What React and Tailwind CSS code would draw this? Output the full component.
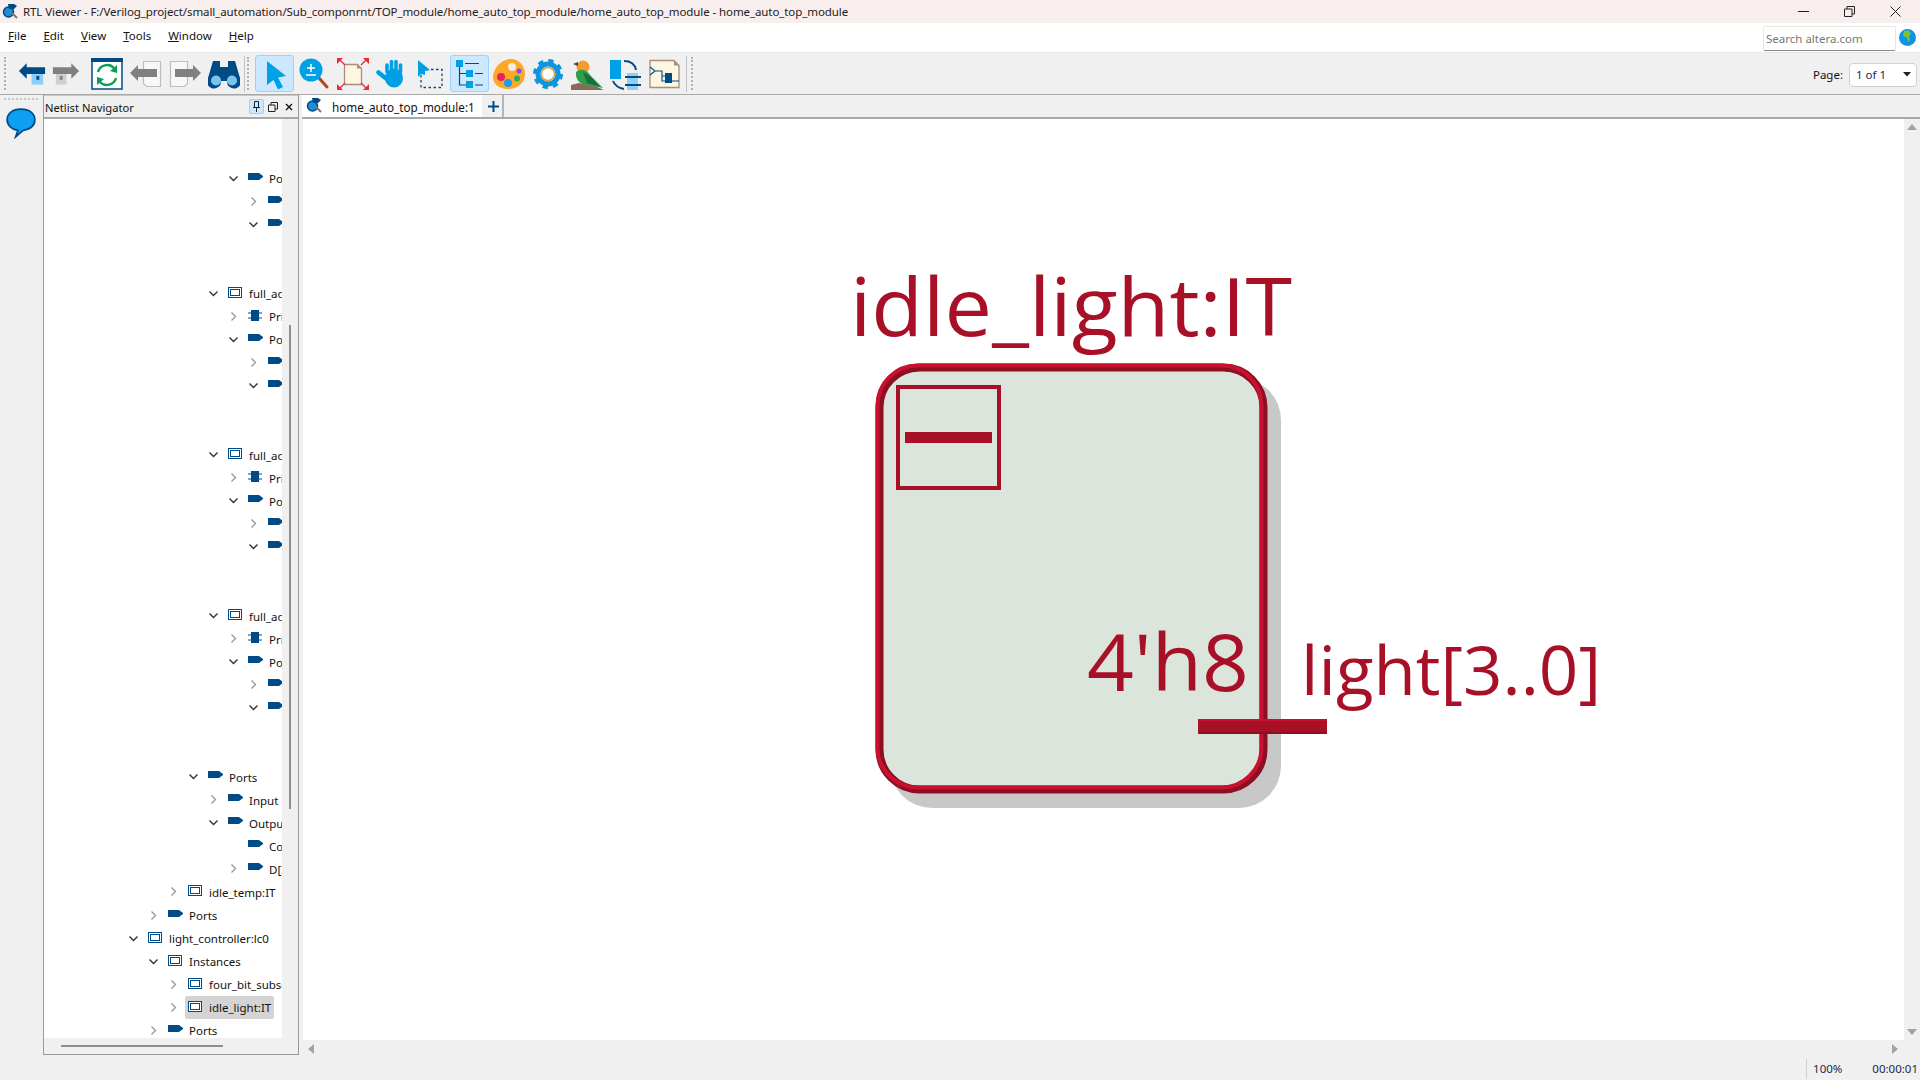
import React from 'react';

const NAVY = '#004a86';
const SKY = '#00a0e6';

const menus = ['File', 'Edit', 'View', 'Tools', 'Window', 'Help'];

const block = (name) => [
  [4, 'open', 'inst', name],
  [5, 'closed', 'prim', 'Primitives'],
  [5, 'open', 'port', 'Ports'],
  [6, 'closed', 'port', 'Input'],
  [6, 'open', 'port', 'Output'],
  null,
  null,
];

const treeRows = [
  [5, 'open', 'port', 'Ports'],
  [6, 'closed', 'port', 'Input'],
  [6, 'open', 'port', 'Output'],
  null,
  null,
  ...block('full_adder:fa1'),
  ...block('full_adder:fa2'),
  ...block('full_adder:fa3'),
  [3, 'open', 'port', 'Ports'],
  [4, 'closed', 'port', 'Input'],
  [4, 'open', 'port', 'Output'],
  [5, null, 'port', 'Cout'],
  [5, 'closed', 'port', 'D[3..0]'],
  [2, 'closed', 'inst', 'idle_temp:IT'],
  [1, 'closed', 'port', 'Ports'],
  [0, 'open', 'inst', 'light_controller:lc0'],
  [1, 'open', 'inst', 'Instances'],
  [2, 'closed', 'inst', 'four_bit_subscriber:fb0'],
  [2, 'closed', 'inst', 'idle_light:IT', true],
  [1, 'closed', 'port', 'Ports'],
];

const Chevron = ({ state }) => {
  if (!state) return <span className="w-[19px] shrink-0" />;
  return (
    <span className="w-[19px] shrink-0 flex">
      <svg width="9" height="9" viewBox="0 0 9 9" className="block">
        {state === 'open' ? (
          <polyline points="0.5,2.5 4.5,6.5 8.5,2.5" fill="none" stroke="#333" strokeWidth="1.4" />
        ) : (
          <polyline points="2.5,0.5 6.5,4.5 2.5,8.5" fill="none" stroke="#9a9a9a" strokeWidth="1.4" />
        )}
      </svg>
    </span>
  );
};

const TreeIcon = ({ type }) => {
  if (type === 'port') {
    return (
      <svg width="15" height="8" viewBox="0 0 15 8" className="block -mt-[3px]">
        <polygon points="0,0 11,0 15,3 15,4 11,7 0,7" fill={NAVY} />
      </svg>
    );
  }
  if (type === 'prim') {
    return (
      <svg width="14" height="12" viewBox="0 0 14 12" className="block -mt-[2px]">
        <rect x="3" y="0" width="8" height="11" fill={NAVY} />
        <path d="M0 3h14M0 8h14" stroke={NAVY} strokeWidth="1.2" />
      </svg>
    );
  }
  return (
    <svg width="14" height="12" viewBox="0 0 14 12" className="block -mt-[1px]">
      <rect x="0.5" y="0.5" width="13" height="10" fill="#fff" stroke={NAVY} />
      <rect x="2.5" y="2.5" width="9" height="6" fill="#fff" stroke={NAVY} />
    </svg>
  );
};

const TreeRow = ({ row }) => {
  if (!row) return <div className="h-[23.03px]" />;
  const [level, state, icon, label, selected] = row;
  return (
    <div className="h-[23.03px] flex items-center whitespace-nowrap" style={{ paddingLeft: 85 + level * 20 }}>
      <Chevron state={state} />
      <span className={`flex items-center h-[23px] -ml-[3px] pl-[3px] pr-[3px] rounded-[2px] ${selected ? 'bg-[#d4d4d4]' : ''}`}>
        <span className="w-[21px] shrink-0">
          <TreeIcon type={icon} />
        </span>
        <span className="pt-[1px]">{label}</span>
      </span>
    </div>
  );
};

const Logo = () => (
  <svg width="16" height="16" viewBox="0 0 16 16" className="block shrink-0">
    <circle cx="6.5" cy="8" r="5" fill="#1b8fd6" stroke={NAVY} strokeWidth="1.5" />
    <path d="M10 9l5 5" stroke="#777" strokeWidth="2" />
    <polygon points="6,0 12,0 15,2 12,5 7,5" fill={NAVY} />
  </svg>
);

const Icon = ({ children }) => (
  <svg width="32" height="32" viewBox="0 0 32 32" className="block">
    {children}
  </svg>
);

const BackIcon = () => (
  <Icon>
    <rect x="15" y="15" width="12" height="12" fill="#8dcff5" />
    <rect x="20" y="18" width="3" height="4" fill={NAVY} />
    <polygon points="2,13 10,5 10,9 29,9 29,16 10,16 10,21" fill={NAVY} />
  </Icon>
);

const ForwardIcon = () => (
  <Icon>
    <rect x="6" y="15" width="11" height="12" fill="#cfcfcf" />
    <rect x="10" y="18" width="3" height="4" fill="#808080" />
    <polygon points="30,13 22,5 22,9 3,9 3,16 22,16 22,21" fill="#808080" />
  </Icon>
);

const RefreshIcon = () => (
  <Icon>
    <rect x="1" y="1" width="30" height="30" fill="#fff" stroke={NAVY} strokeWidth="1.5" />
    <rect x="0" y="0" width="32" height="4" fill={NAVY} />
    <path d="M7 14a9.5 9.5 0 0 1 16-4" fill="none" stroke="#0a9d58" strokeWidth="2.4" />
    <path d="M25 20a9.5 9.5 0 0 1-16 4" fill="none" stroke="#0a9d58" strokeWidth="2.4" />
    <polygon points="26,7 26,15 19,13" fill="#0a9d58" />
    <polygon points="6,27 6,19 13,21" fill="#0a9d58" />
  </Icon>
);

const PageBackIcon = () => (
  <Icon>
    <path d="M14.5 3.500h17v25h-14l-3-3z" fill="#f8f8f8" stroke="#bdbdbd" strokeWidth="1.200" transform="translate(-1 0)" />
    <polygon points="0,15 8,7 8,11 27,11 27,19 8,19 8,23" fill="#808080" />
  </Icon>
);

const PageNextIcon = () => (
  <Icon>
    <path d="M0.500 3.500h17v22l-3 3h-14z" fill="#f8f8f8" stroke="#bdbdbd" strokeWidth="1.200" transform="translate(1 0)" />
    <polygon points="32,15 24,7 24,11 6,11 6,19 24,19 24,23" fill="#808080" />
  </Icon>
);

const BinocularsIcon = () => (
  <Icon>
    <path d="M5 3h7v6h8V3h7l5 17a7 7 0 1 1-13 3h-6a7 7 0 1 1-13-3z" fill={NAVY} />
    <circle cx="8" cy="22.500" r="5" fill="#7cc4f0" />
    <circle cx="24" cy="22.500" r="5" fill="#7cc4f0" />
  </Icon>
);

const CursorIcon = () => (
  <Icon>
    <polygon points="8,3 27,18 19,19.500 24,29 19,31.500 14.500,22 8,27" fill={SKY} />
  </Icon>
);

const ZoomIcon = () => (
  <Icon>
    <path d="M21 20l8 9" stroke="#b5451f" strokeWidth="3" strokeLinecap="round" />
    <circle cx="13" cy="12" r="11.500" fill={SKY} />
    <path d="M9 10h8M13 6v8M8 17h10" stroke="#fff" strokeWidth="1.500" />
  </Icon>
);

const FitIcon = () => (
  <Icon>
    <path d="M7.500 6.500h13l4 4v16h-17z" fill="#fdf6e0" stroke="#a68d7d" strokeWidth="1.300" />
    <polygon points="20,6 24.500,10.500 20,10.500" fill="#a68d7d" />
    <path d="M3 2l5 5M29 2l-5 5M3 30l5-5M29 30l-5-5" stroke="#ee2a36" strokeWidth="1.300" />
    <path d="M0 0h6l-6 6zM32 0h-6l6 6zM0 32h6l-6-6zM32 32h-6l6-6z" fill="#ee2a36" />
  </Icon>
);

const HandIcon = () => (
  <Icon>
    <ellipse cx="18" cy="20" rx="9" ry="9.500" fill={SKY} />
    <path d="M11 14V7M15.500 13V3.500M20 13V3.500M24.500 14V7" stroke={SKY} strokeWidth="3.600" strokeLinecap="round" />
    <path d="M12 22L2.500 14.500" stroke={SKY} strokeWidth="4.500" strokeLinecap="round" />
  </Icon>
);

const MarqueeIcon = () => (
  <Icon>
    <rect x="6" y="11.500" width="21" height="18" fill="none" stroke={NAVY} strokeWidth="1.300" strokeDasharray="2.500 2.500" />
    <polygon points="3,2 15,12 10,13 10,17 6,16 3,19" fill={SKY} />
  </Icon>
);

const TreeViewIcon = () => (
  <Icon>
    <rect x="2" y="2" width="7" height="7" fill={SKY} />
    <rect x="12" y="12" width="7" height="7" fill={SKY} />
    <rect x="12" y="23" width="7" height="7" fill={SKY} />
    <path d="M5.500 9v18H12M5.500 15.500H12M11 5.500h14M21 15.500h8M21 27h8" fill="none" stroke={NAVY} strokeWidth="1.200" />
  </Icon>
);

const PaletteIcon = () => (
  <Icon>
    <path d="M18 1c8 0 14 7 14 15 0 9-8 15-17 15C6 31 0 26 0 19 0 11 8 1 18 1z" fill="#ffa726" />
    <circle cx="19" cy="9" r="4" fill="#f3ece0" />
    <circle cx="8" cy="19" r="4" fill="#e91e63" />
    <circle cx="15" cy="25" r="4" fill="#1e9be9" />
    <circle cx="24" cy="20.500" r="3" fill="#27ae60" />
    <circle cx="26" cy="13" r="2.500" fill="#7c4dff" />
  </Icon>
);

const GearIcon = () => (
  <Icon>
    <circle cx="16" cy="16" r="12.500" fill="none" stroke="#0d95df" strokeWidth="5" strokeDasharray="5 4.800" />
    <circle cx="16" cy="16" r="10" fill="none" stroke="#0d95df" strokeWidth="5" />
    <circle cx="16" cy="16" r="6.500" fill="#fff" stroke="#e0a43a" strokeWidth="1.500" />
  </Icon>
);

const BirdIcon = () => (
  <Icon>
    <polygon points="0,32 0,27 8,25 24,28 33,32" fill="#8a6a5a" />
    <circle cx="12" cy="9" r="6.500" fill="#f39c2d" />
    <polygon points="2,6 7,4 7,8" fill="#444" />
    <path d="M5 14c5-4 11-2 14 3l13 13-15-3C9 27 4 21 5 14z" fill="#2e9e4a" />
    <path d="M12 14l7 4 10 11-13-4z" fill="#16713a" />
  </Icon>
);

const HierarchyIcon = () => (
  <Icon>
    <rect x="0" y="2" width="11" height="19" fill="#00a0e6" />
    <path d="M14 3c7 0 11 4 12 9M3 23c2 5 6 7 11 8" fill="none" stroke={NAVY} strokeWidth="2" />
    <rect x="17" y="15" width="11" height="17" fill="#8dcff5" />
    <path d="M15 19h16M15 27h16" stroke={NAVY} strokeWidth="1.800" />
  </Icon>
);

const ChipIcon = () => (
  <Icon>
    <path d="M1 2.500h24l5 5v22H1z" fill="#fdf6e0" stroke="#a68d7d" strokeWidth="1.300" />
    <polygon points="25,2.500 30,7.500 25,7.500" fill="#a68d7d" />
    <path d="M1 9l5 4-5 4M6 13h7v10h17M13 18h5" fill="none" stroke={NAVY} strokeWidth="1.100" />
    <rect x="16" y="15" width="7" height="10" fill={NAVY} />
  </Icon>
);

const Btn = ({ width = 'w-[39px]', active, children }) => (
  <div className={`${width} h-[37px] shrink-0 flex items-center justify-center rounded-[3px] border ${active ? 'bg-[#cce8ff] border-[#99d1ff]' : 'border-transparent'}`}>
    {children}
  </div>
);

const Grip = () => (
  <div className="w-[2px] h-[33px] border-l-2 border-dotted border-[#b0b0b0]" />
);

const Triangle = ({ points, className = '' }) => (
  <svg width="12" height="12" viewBox="0 0 12 12" className={`block ${className}`}>
    <polygon points={points} fill="#a3a3a3" />
  </svg>
);

const Diagram = () => (
  <svg viewBox="303 119 1601 921" width="1601" height="921" className="block">
    <rect x="890" y="378" width="391" height="430" rx="42" fill="#c8c8c8" />
    <rect x="879.500" y="367.500" width="384" height="422" rx="40" fill="#dce5dc" stroke="#8e0e22" strokeWidth="8" />
    <rect x="877.500" y="365.500" width="384" height="422" rx="40" fill="none" stroke="#c8112f" strokeWidth="4" />
    <rect x="898" y="387" width="101" height="101" fill="none" stroke="#a81028" strokeWidth="4" />
    <rect x="905" y="432" width="87" height="11" fill="#a81028" />
    <rect x="1198" y="719" width="129" height="15" fill="#a81028" />
    <rect x="1198" y="719" width="128" height="2" fill="#c8112f" />
    <rect x="1200" y="732" width="127" height="2" fill="#8e0e22" />
    <text x="850" y="336" textLength="442" lengthAdjust="spacingAndGlyphs" className="font-['Open_Sans',sans-serif] fill-[#a81028] text-[81px]">idle_light:IT</text>
    <text x="1087" y="691" textLength="162" lengthAdjust="spacingAndGlyphs" className="font-['Open_Sans',sans-serif] fill-[#a81028] text-[78px]">4'h8</text>
    <text x="1301" y="695" textLength="300" lengthAdjust="spacingAndGlyphs" className="font-['Open_Sans',sans-serif] fill-[#a81028] text-[67px]">light[3..0]</text>
  </svg>
);

export default function App() {
  return (
    <div className="w-[1920px] h-[1080px] overflow-hidden flex flex-col bg-[#f0f0f0] text-[11.5px] text-[#111] font-['Noto_Sans',sans-serif]">
      {/* title bar */}
      <div className="h-[23px] shrink-0 flex items-center bg-[#f9eeee] pl-[2px]">
        <Logo />
        <span className="ml-[5px] text-[#222] tracking-[-0.09px]">
          RTL Viewer - F:/Verilog_project/small_automation/Sub_componrnt/TOP_module/home_auto_top_module/home_auto_top_module - home_auto_top_module
        </span>
        <div className="ml-auto flex items-center gap-[35px] pr-[19px]">
          <svg width="11" height="11" viewBox="0 0 11 11" className="block">
            <path d="M0 5.500h11" stroke="#222" />
          </svg>
          <svg width="11" height="11" viewBox="0 0 11 11" className="block">
            <path d="M.5 3h7.500v7.500H.5zM3 3V.5h7.500V8H8" fill="none" stroke="#222" />
          </svg>
          <svg width="11" height="11" viewBox="0 0 11 11" className="block">
            <path d="M.5.500l10 10M10.500.500l-10 10" stroke="#222" />
          </svg>
        </div>
      </div>

      {/* menu bar */}
      <div className="h-[29px] shrink-0 flex items-center bg-white pl-[8px] pr-[4px]">
        <div className="flex gap-[17px] pb-[3px]">
          {menus.map((m) => (
            <span key={m}>
              <span className="underline">{m[0]}</span>
              {m.slice(1)}
            </span>
          ))}
        </div>
        <div className="ml-auto mt-[2px] w-[133px] h-[25px] flex items-center pl-[2px] border border-[#e6e6e6] border-b-[#8a8a8a] rounded-[2px] text-[#777]">
          Search altera.com
        </div>
        <svg width="17" height="17" viewBox="0 0 17 17" className="block ml-[3px]">
          <circle cx="8.500" cy="8.500" r="8.500" fill="#0c95e8" />
          <path d="M5 2l5-.5 2 3-2 3 1 3-2 3-1-5-4-1.500z" fill="#7bc43a" />
        </svg>
      </div>

      {/* toolbar */}
      <div className="h-[43px] shrink-0 flex items-center border-t border-[#e8e8e8] border-b border-b-[#a8a8a8] pl-[4px]">
        <Grip />
        <div className="ml-[10px] flex items-center">
          <Btn width="w-[33px]"><BackIcon /></Btn>
          <Btn width="w-[33px]"><ForwardIcon /></Btn>
        </div>
        <div className="ml-[5px] flex items-center">
          <Btn><RefreshIcon /></Btn>
          <Btn><PageBackIcon /></Btn>
          <Btn><PageNextIcon /></Btn>
          <Btn><BinocularsIcon /></Btn>
        </div>
        <div className="w-px h-[36px] bg-[#c4c4c4] ml-[1px]" />
        <div className="ml-[2px]"><Grip /></div>
        <div className="ml-[6px] flex items-center">
          <Btn active><CursorIcon /></Btn>
          <Btn><ZoomIcon /></Btn>
          <Btn><FitIcon /></Btn>
          <Btn><HandIcon /></Btn>
          <Btn><MarqueeIcon /></Btn>
          <Btn active><TreeViewIcon /></Btn>
          <Btn><PaletteIcon /></Btn>
          <Btn><GearIcon /></Btn>
          <Btn><BirdIcon /></Btn>
          <Btn><HierarchyIcon /></Btn>
          <Btn><ChipIcon /></Btn>
        </div>
        <div className="w-px h-[36px] bg-[#c4c4c4] ml-[2px]" />
        <div className="ml-[4px]"><Grip /></div>
        <div className="ml-auto flex items-center pr-[3px] pt-[2px]">
          <span>Page:</span>
          <div className="ml-[6px] w-[68px] h-[24px] flex items-center pl-[6px] pr-[5px] bg-white border border-[#d0d0d0] rounded-[4px] text-[#1a2a4a]">
            <span>1 of 1</span>
            <svg width="8" height="5" viewBox="0 0 8 5" className="block ml-auto">
              <polygon points="0,0 8,0 4,4.500" fill="#222" />
            </svg>
          </div>
        </div>
      </div>

      {/* body */}
      <div className="h-[963px] shrink-0 flex">
        {/* left rail */}
        <div className="w-[43px] shrink-0 pt-[3px] pl-[4px]">
          <div className="w-[34px] border-t-2 border-dotted border-[#c4c4c4]" />
          <svg width="32" height="32" viewBox="0 0 30 30" className="block ml-[1px] mt-[7px]">
            <path d="M15 2c8 0 13 4 13 10s-5 9-11 10l-7 6 2-6C6 21 2 17 2 12 2 6 7 2 15 2z" fill="#0da0f2" stroke={NAVY} strokeWidth="1.600" />
          </svg>
        </div>

        {/* netlist navigator */}
        <div className="w-[256px] h-[960px] shrink-0 flex flex-col border-l border-r border-b border-[#9a9a9a]">
          <div className="h-[24px] shrink-0 flex items-center pl-[1px] pr-[3px] border-t border-[#c8c8c8] border-b-2 border-b-[#a8a8a8]">
            <span className="pt-[4px] text-[11.2px]">Netlist Navigator</span>
            <div className="ml-auto flex items-center gap-[4px]">
              <div className="w-[15px] h-[15px] flex items-center justify-center bg-[#cce8ff] border border-[#99d1ff] rounded-[2px]">
                <svg width="9" height="11" viewBox="0 0 9 11" className="block">
                  <path d="M2.500.5h4v6h-4zM1 6.500h7M4.500 6.500V11" fill="none" stroke="#222" />
                </svg>
              </div>
              <svg width="10" height="10" viewBox="0 0 10 10" className="block">
                <path d="M.5 3h6.500v6.500H.5zM3 3V.5h6.500V7H7" fill="none" stroke="#222" />
              </svg>
              <svg width="12" height="12" viewBox="0 0 12 12" className="block ml-[1px]">
                <path d="M3 3l6 6M9 3l-6 6" stroke="#111" strokeWidth="1.400" />
              </svg>
            </div>
          </div>
          <div className="flex-1 min-h-0 flex">
            <div className="w-[238px] bg-white overflow-hidden pt-[48px]">
              {treeRows.map((row, i) => (
                <TreeRow key={i} row={row} />
              ))}
            </div>
            <div className="flex-1 pl-[7px] pt-[206px] pb-[229px]">
              <div className="w-[2px] h-full bg-[#8e8e8e]" />
            </div>
          </div>
          <div className="h-[16px] shrink-0 flex items-center pl-[17px]">
            <div className="w-[162px] h-[2px] bg-[#8e8e8e]" />
          </div>
        </div>

        {/* main */}
        <div className="flex-1 min-w-0 flex flex-col pl-[4px]">
          <div className="h-[24px] shrink-0 flex items-stretch border-b-2 border-[#a8a8a8] -ml-[1px]">
            <div className="w-[180px] flex items-center bg-white pl-[4px] text-[11.7px]">
              <Logo />
              <span className="ml-[10px] pt-[3px]">home_auto_top_module:1</span>
            </div>
            <div className="w-[20px] ml-[2px] flex items-center justify-center border-r-2 border-[#b4b4b4]">
              <svg width="11" height="11" viewBox="0 0 11 11" className="block">
                <path d="M5.500 0v11M0 5.500h11" stroke={NAVY} strokeWidth="2" />
              </svg>
            </div>
          </div>
          <div className="flex-1 min-h-0 flex">
            <div className="w-[1601px] bg-white overflow-hidden">
              <Diagram />
            </div>
            <div className="flex-1 flex flex-col items-center justify-between py-[2px]">
              <Triangle points="1,9 11,9 6,3" />
              <Triangle points="1,3 11,3 6,9" />
            </div>
          </div>
          <div className="h-[18px] shrink-0 flex items-center justify-between pl-[2px] pr-[19px]">
            <Triangle points="9,1 9,11 3,6" />
            <Triangle points="3,1 3,11 9,6" />
          </div>
        </div>
      </div>

      {/* status bar */}
      <div className="flex-1 flex items-center justify-end text-[#1a2a4a] pr-[2px]">
        <div className="h-[20px] w-px bg-[#d0d0d0] mr-[6px]" />
        <span>100%</span>
        <span className="ml-[30px]">00:00:01</span>
      </div>
    </div>
  );
}
